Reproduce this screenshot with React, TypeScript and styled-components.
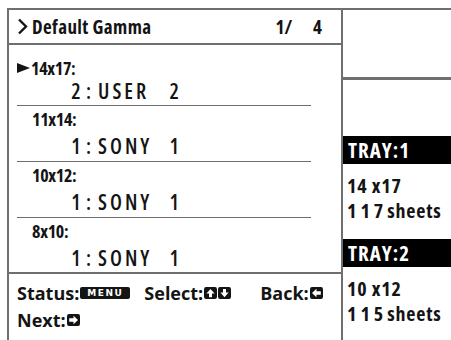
import styled, { createGlobalStyle } from "styled-components";

const LINE = "#6f6f6f";
const INK = "#141414";

const GlobalStyle = createGlobalStyle`
  html, body { margin: 0; padding: 0; background: #fff; }
  body {
    font-family: "Open Sans", "Roboto", "Liberation Sans", sans-serif;
    font-stretch: 75%;
    color: ${INK};
  }
`;

const Frame = styled.div`
  width: 444px;
  height: 332px;
  margin: 8px 0 0 7px;
  border-top: 2px solid ${LINE};
  border-left: 2px solid ${LINE};
  display: grid;
  grid-template-columns: 334px 108px;
  overflow: hidden;
`;

const LeftPanel = styled.div`
  display: flex;
  flex-direction: column;
  border-right: 2px solid ${LINE};
`;

const Header = styled.div`
  height: 33px;
  border-bottom: 2px solid ${LINE};
  display: flex;
  align-items: center;
  justify-content: space-between;
  padding: 0 19px 0 8px;
  font-size: 19px;
  font-weight: 700;
`;

const Title = styled.div`
  display: flex;
  align-items: center;
  gap: 4px;
  letter-spacing: 0.4px;
`;

const Pager = styled.span`
  display: flex;
  gap: 21px;
  font-stretch: 85%;
`;

const Group = styled.div<{ $top: number; $label: number; $value: number; $last?: boolean }>`
  display: grid;
  grid-template-rows: ${(p) => p.$label}px ${(p) => p.$value}px;
  padding-top: ${(p) => p.$top}px;
  padding-bottom: ${(p) => (p.$last ? 0 : 1)}px;
  margin: 0 ${(p) => (p.$last ? 0 : 30)}px 0 8px;
  border-bottom: ${(p) => (p.$last ? "none" : `1px solid ${LINE}`)};
`;

const SizeLabel = styled.div`
  display: flex;
  align-items: center;
  font-size: 18px;
  font-weight: 700;
  letter-spacing: -0.3px;
`;

const Indent = styled.span`
  display: inline-block;
  width: 15px;
`;

const ValueRow = styled.div`
  display: flex;
  align-items: center;
  padding-left: 53px;
  font-size: 21px;
  font-weight: 600;
  font-stretch: 78%;
`;

const Num = styled.span`
  display: inline-block;
  width: 12px;
  text-align: center;
`;

const Colon = styled.span`
  margin: 0 7px 0 4px;
`;

const Name = styled.span`
  display: inline-block;
  flex: none;
  letter-spacing: 3px;
  width: 70px;
`;

const Footer = styled.div`
  flex: 1;
  border-top: 2px solid ${LINE};
  padding: 5px 0 0 8px;
  font-size: 18px;
  font-weight: 700;
  font-stretch: 95%;
`;

const FooterLine = styled.div`
  height: 27px;
  display: flex;
  align-items: center;
`;

const Hint = styled.span<{ $gap?: number }>`
  display: inline-flex;
  align-items: center;
  margin-right: ${(p) => p.$gap ?? 0}px;
`;

const MenuBadge = styled.span`
  display: inline-flex;
  align-items: center;
  justify-content: center;
  height: 12px;
  width: 50px;
  background: ${INK};
  border-radius: 2px;
  color: #fff;
  font-family: "DejaVu Sans", "Liberation Sans", sans-serif;
  font-stretch: normal;
  font-size: 9px;
  font-weight: 700;
  letter-spacing: 1.5px;
  margin-left: 1px;
`;

const RightPanel = styled.div`
  display: flex;
  flex-direction: column;
`;

const TopBlock = styled.div`
  height: 67px;
  border-bottom: 3px solid ${LINE};
  margin-bottom: 56px;
`;

const TrayBar = styled.div`
  height: 28px;
  background: #000;
  color: #fff;
  display: flex;
  align-items: center;
  padding-left: 5px;
  font-size: 21px;
  font-weight: 700;
  letter-spacing: 1px;
`;

const TrayInfo = styled.div`
  height: 75px;
  padding: 9px 0 0 4px;
  box-sizing: border-box;
  font-size: 20px;
  font-weight: 700;
  font-stretch: 85%;
  letter-spacing: 0.8px;
`;

const InfoLine = styled.div`
  height: 25px;
  display: flex;
  align-items: center;
  white-space: pre;
`;

const Digits = styled.span`
  letter-spacing: 4px;
`;

type Dir = "up" | "down" | "left" | "right";

const arrowPaths: Record<Dir, string> = {
  up: "M6.5 1.8 L10.6 6 L8 6 L8 9.3 L5 9.3 L5 6 L2.4 6 Z",
  down: "M6.5 9.3 L10.6 5.1 L8 5.1 L8 1.8 L5 1.8 L5 5.1 L2.4 5.1 Z",
  left: "M2 5.5 L6.5 1.6 L6.5 4 L10.8 4 L10.8 7 L6.5 7 L6.5 9.4 Z",
  right: "M11 5.5 L6.5 1.6 L6.5 4 L2.2 4 L2.2 7 L6.5 7 L6.5 9.4 Z",
};

function Key({ dir }: { dir: Dir }) {
  return (
    <svg width="13" height="12" viewBox="0 0 13 11" preserveAspectRatio="none" style={{ display: "block", marginLeft: 1 }}>
      <rect x="0" y="0" width="13" height="11" rx="2" fill={INK} />
      <path d={arrowPaths[dir]} fill="#fff" />
    </svg>
  );
}

function Chevron() {
  return (
    <svg width="11" height="17" viewBox="0 0 11 17" style={{ display: "block" }}>
      <polyline points="2,1.5 9,8.5 2,15.5" fill="none" stroke={INK} strokeWidth="2.4" />
    </svg>
  );
}

function Pointer() {
  return (
    <svg width="13" height="10" viewBox="0 0 13 10" style={{ display: "block", marginRight: 1 }}>
      <polygon points="0,0 13,5 0,10" fill={INK} />
    </svg>
  );
}

type Entry = { size: string; num: string; name: string; slot: string; active?: boolean };

const entries: Entry[] = [
  { size: "14x17:", num: "2", name: "USER", slot: "2", active: true },
  { size: "11x14:", num: "1", name: "SONY", slot: "1" },
  { size: "10x12:", num: "1", name: "SONY", slot: "1" },
  { size: "8x10:", num: "1", name: "SONY", slot: "1" },
];

const trays = [
  { id: "1", size: "14 x17", sheets: "117" },
  { id: "2", size: "10 x12", sheets: "115" },
];

export default function App() {
  return (
    <>
      <GlobalStyle />
      <Frame>
        <LeftPanel>
          <Header>
            <Title>
              <Chevron />
              Default Gamma
            </Title>
            <Pager>
              <span>1/</span>
              <span>4</span>
            </Pager>
          </Header>
          {entries.map((e, i) => (
            <Group
              key={e.size}
              $top={i === 0 ? 13 : 0}
              $label={i === 0 ? 20 : 26}
              $value={i === 0 ? 26 : 28}
              $last={i === entries.length - 1}
            >
              <SizeLabel>
                {e.active ? <Pointer /> : <Indent />}
                {e.size}
              </SizeLabel>
              <ValueRow>
                <Num>{e.num}</Num>
                <Colon>:</Colon>
                <Name>{e.name}</Name>
                <Num>{e.slot}</Num>
              </ValueRow>
            </Group>
          ))}
          <Footer>
            <FooterLine>
              <Hint $gap={14}>
                Status:<MenuBadge>MENU</MenuBadge>
              </Hint>
              <Hint $gap={29}>
                Select:<Key dir="up" />
                <Key dir="down" />
              </Hint>
              <Hint>
                Back:<Key dir="left" />
              </Hint>
            </FooterLine>
            <FooterLine>
              <Hint>
                Next:<Key dir="right" />
              </Hint>
            </FooterLine>
          </Footer>
        </LeftPanel>
        <RightPanel>
          <TopBlock />
          {trays.map((t) => (
            <div key={t.id}>
              <TrayBar>TRAY:{t.id}</TrayBar>
              <TrayInfo>
                <InfoLine>{t.size}</InfoLine>
                <InfoLine>
                  <Digits>{t.sheets}</Digits>sheets
                </InfoLine>
              </TrayInfo>
            </div>
          ))}
        </RightPanel>
      </Frame>
    </>
  );
}
